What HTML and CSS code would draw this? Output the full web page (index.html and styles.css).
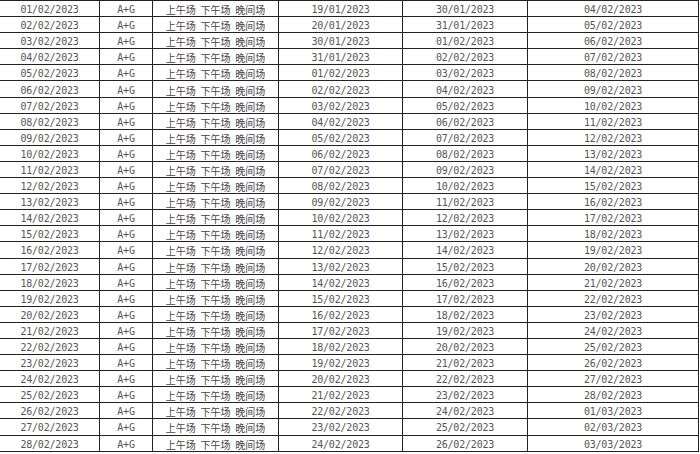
FILE: index.html
```html
<!DOCTYPE html>
<html lang="zh">
<head>
<meta charset="utf-8">
<title>场次表</title>
<link rel="stylesheet" href="styles.css">
</head>
<body>
<div class="sheet">
<div class="c">01/02/2023</div><div class="c">A+G</div><div class="c zh">上午场 下午场 晚间场</div><div class="c">19/01/2023</div><div class="c">30/01/2023</div><div class="c">04/02/2023</div>
<div class="c">02/02/2023</div><div class="c">A+G</div><div class="c zh">上午场 下午场 晚间场</div><div class="c">20/01/2023</div><div class="c">31/01/2023</div><div class="c">05/02/2023</div>
<div class="c">03/02/2023</div><div class="c">A+G</div><div class="c zh">上午场 下午场 晚间场</div><div class="c">30/01/2023</div><div class="c">01/02/2023</div><div class="c">06/02/2023</div>
<div class="c">04/02/2023</div><div class="c">A+G</div><div class="c zh">上午场 下午场 晚间场</div><div class="c">31/01/2023</div><div class="c">02/02/2023</div><div class="c">07/02/2023</div>
<div class="c">05/02/2023</div><div class="c">A+G</div><div class="c zh">上午场 下午场 晚间场</div><div class="c">01/02/2023</div><div class="c">03/02/2023</div><div class="c">08/02/2023</div>
<div class="c">06/02/2023</div><div class="c">A+G</div><div class="c zh">上午场 下午场 晚间场</div><div class="c">02/02/2023</div><div class="c">04/02/2023</div><div class="c">09/02/2023</div>
<div class="c">07/02/2023</div><div class="c">A+G</div><div class="c zh">上午场 下午场 晚间场</div><div class="c">03/02/2023</div><div class="c">05/02/2023</div><div class="c">10/02/2023</div>
<div class="c">08/02/2023</div><div class="c">A+G</div><div class="c zh">上午场 下午场 晚间场</div><div class="c">04/02/2023</div><div class="c">06/02/2023</div><div class="c">11/02/2023</div>
<div class="c">09/02/2023</div><div class="c">A+G</div><div class="c zh">上午场 下午场 晚间场</div><div class="c">05/02/2023</div><div class="c">07/02/2023</div><div class="c">12/02/2023</div>
<div class="c">10/02/2023</div><div class="c">A+G</div><div class="c zh">上午场 下午场 晚间场</div><div class="c">06/02/2023</div><div class="c">08/02/2023</div><div class="c">13/02/2023</div>
<div class="c">11/02/2023</div><div class="c">A+G</div><div class="c zh">上午场 下午场 晚间场</div><div class="c">07/02/2023</div><div class="c">09/02/2023</div><div class="c">14/02/2023</div>
<div class="c">12/02/2023</div><div class="c">A+G</div><div class="c zh">上午场 下午场 晚间场</div><div class="c">08/02/2023</div><div class="c">10/02/2023</div><div class="c">15/02/2023</div>
<div class="c">13/02/2023</div><div class="c">A+G</div><div class="c zh">上午场 下午场 晚间场</div><div class="c">09/02/2023</div><div class="c">11/02/2023</div><div class="c">16/02/2023</div>
<div class="c">14/02/2023</div><div class="c">A+G</div><div class="c zh">上午场 下午场 晚间场</div><div class="c">10/02/2023</div><div class="c">12/02/2023</div><div class="c">17/02/2023</div>
<div class="c">15/02/2023</div><div class="c">A+G</div><div class="c zh">上午场 下午场 晚间场</div><div class="c">11/02/2023</div><div class="c">13/02/2023</div><div class="c">18/02/2023</div>
<div class="c">16/02/2023</div><div class="c">A+G</div><div class="c zh">上午场 下午场 晚间场</div><div class="c">12/02/2023</div><div class="c">14/02/2023</div><div class="c">19/02/2023</div>
<div class="c">17/02/2023</div><div class="c">A+G</div><div class="c zh">上午场 下午场 晚间场</div><div class="c">13/02/2023</div><div class="c">15/02/2023</div><div class="c">20/02/2023</div>
<div class="c">18/02/2023</div><div class="c">A+G</div><div class="c zh">上午场 下午场 晚间场</div><div class="c">14/02/2023</div><div class="c">16/02/2023</div><div class="c">21/02/2023</div>
<div class="c">19/02/2023</div><div class="c">A+G</div><div class="c zh">上午场 下午场 晚间场</div><div class="c">15/02/2023</div><div class="c">17/02/2023</div><div class="c">22/02/2023</div>
<div class="c">20/02/2023</div><div class="c">A+G</div><div class="c zh">上午场 下午场 晚间场</div><div class="c">16/02/2023</div><div class="c">18/02/2023</div><div class="c">23/02/2023</div>
<div class="c">21/02/2023</div><div class="c">A+G</div><div class="c zh">上午场 下午场 晚间场</div><div class="c">17/02/2023</div><div class="c">19/02/2023</div><div class="c">24/02/2023</div>
<div class="c">22/02/2023</div><div class="c">A+G</div><div class="c zh">上午场 下午场 晚间场</div><div class="c">18/02/2023</div><div class="c">20/02/2023</div><div class="c">25/02/2023</div>
<div class="c">23/02/2023</div><div class="c">A+G</div><div class="c zh">上午场 下午场 晚间场</div><div class="c">19/02/2023</div><div class="c">21/02/2023</div><div class="c">26/02/2023</div>
<div class="c">24/02/2023</div><div class="c">A+G</div><div class="c zh">上午场 下午场 晚间场</div><div class="c">20/02/2023</div><div class="c">22/02/2023</div><div class="c">27/02/2023</div>
<div class="c">25/02/2023</div><div class="c">A+G</div><div class="c zh">上午场 下午场 晚间场</div><div class="c">21/02/2023</div><div class="c">23/02/2023</div><div class="c">28/02/2023</div>
<div class="c">26/02/2023</div><div class="c">A+G</div><div class="c zh">上午场 下午场 晚间场</div><div class="c">22/02/2023</div><div class="c">24/02/2023</div><div class="c">01/03/2023</div>
<div class="c">27/02/2023</div><div class="c">A+G</div><div class="c zh">上午场 下午场 晚间场</div><div class="c">23/02/2023</div><div class="c">25/02/2023</div><div class="c">02/03/2023</div>
<div class="c">28/02/2023</div><div class="c">A+G</div><div class="c zh">上午场 下午场 晚间场</div><div class="c">24/02/2023</div><div class="c">26/02/2023</div><div class="c">03/03/2023</div>
</div>
</body>
</html>
```
FILE: styles.css
```css
html, body {
  margin: 0;
  padding: 0;
  background: #ffffff;
}

.sheet {
  display: grid;
  grid-template-columns: 100px 53px 126px 124px 125px 171px;
  grid-auto-rows: 16.1px;
  width: 699px;
  border-top: 1px solid #222;
  font-family: "DejaVu Sans Mono", "Noto Sans CJK SC", monospace;
  font-size: 10px;
  color: #555;
}

.c {
  box-sizing: border-box;
  border-right: 1px solid #222;
  border-bottom: 1px solid #222;
  display: flex;
  align-items: center;
  justify-content: center;
  padding-top: 2px;
  letter-spacing: -0.2px;
  white-space: nowrap;
  overflow: hidden;
}

.zh {
  font-family: "Noto Sans CJK SC", sans-serif;
  color: #444;
  letter-spacing: 0;
  word-spacing: 2.5px;
}
```
